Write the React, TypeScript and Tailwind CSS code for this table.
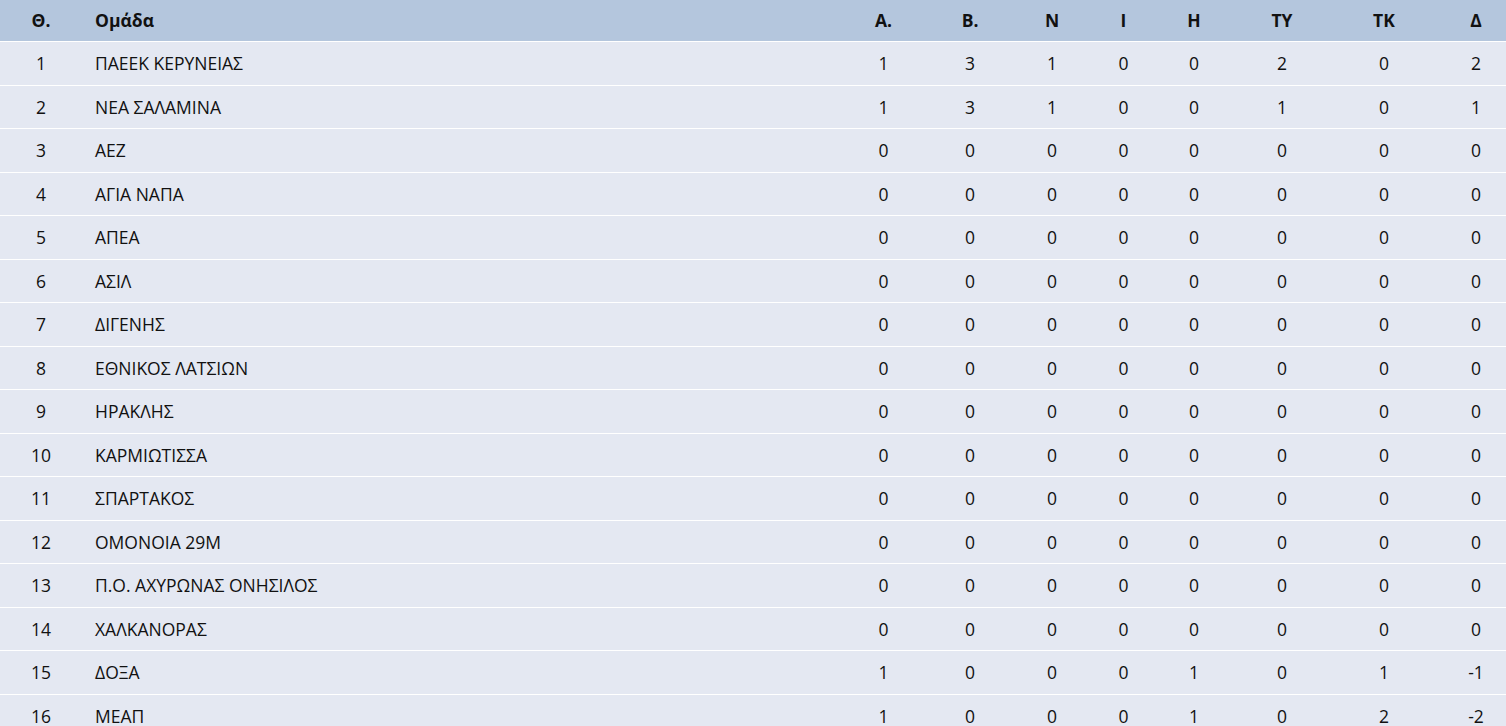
import React from "react";

type Row = [number, string, number, number, number, number, number, number, number, number];

const rows: Row[] = [
  [1, "ΠΑΕΕΚ ΚΕΡΥΝΕΙΑΣ", 1, 3, 1, 0, 0, 2, 0, 2],
  [2, "ΝΕΑ ΣΑΛΑΜΙΝΑ", 1, 3, 1, 0, 0, 1, 0, 1],
  [3, "ΑΕΖ", 0, 0, 0, 0, 0, 0, 0, 0],
  [4, "ΑΓΙΑ ΝΑΠΑ", 0, 0, 0, 0, 0, 0, 0, 0],
  [5, "ΑΠΕΑ", 0, 0, 0, 0, 0, 0, 0, 0],
  [6, "ΑΣΙΛ", 0, 0, 0, 0, 0, 0, 0, 0],
  [7, "ΔΙΓΕΝΗΣ", 0, 0, 0, 0, 0, 0, 0, 0],
  [8, "ΕΘΝΙΚΟΣ ΛΑΤΣΙΩΝ", 0, 0, 0, 0, 0, 0, 0, 0],
  [9, "ΗΡΑΚΛΗΣ", 0, 0, 0, 0, 0, 0, 0, 0],
  [10, "ΚΑΡΜΙΩΤΙΣΣΑ", 0, 0, 0, 0, 0, 0, 0, 0],
  [11, "ΣΠΑΡΤΑΚΟΣ", 0, 0, 0, 0, 0, 0, 0, 0],
  [12, "ΟΜΟΝΟΙΑ 29Μ", 0, 0, 0, 0, 0, 0, 0, 0],
  [13, "Π.Ο. ΑΧΥΡΩΝΑΣ ΟΝΗΣΙΛΟΣ", 0, 0, 0, 0, 0, 0, 0, 0],
  [14, "ΧΑΛΚΑΝΟΡΑΣ", 0, 0, 0, 0, 0, 0, 0, 0],
  [15, "ΔΟΞΑ", 1, 0, 0, 0, 1, 0, 1, -1],
  [16, "ΜΕΑΠ", 1, 0, 0, 0, 1, 0, 2, -2],
];

const headers = ["Θ.", "Ομάδα", "Α.", "Β.", "Ν", "Ι", "Η", "ΤΥ", "ΤΚ", "Δ"];

// per-column cell classes (alignment/padding to place text centres)
const cellCls = [
  "text-center",
  "text-left pl-[13px]",
  "text-center",
  "text-center pl-[3px]",
  "text-center pl-[5px]",
  "text-center",
  "text-center pr-[9px]",
  "text-center pr-[7px]",
  "text-center pl-[5px]",
  "text-center pl-[16px]",
];

const gridCols =
  "grid grid-cols-[82px_759px_85px_85px_77px_71px_79px_95px_97px_76px]";

export default function App() {
  return (
    <div
      className="w-[1506px] h-[726px] overflow-hidden bg-[#e4e8f2] text-[#111111]"
      style={{ fontFamily: '"Open Sans", "Noto Sans", sans-serif' }}
    >
      <div className={`${gridCols} h-[41px] items-center bg-[#b4c6dd] text-[17.5px] font-bold`}>
        {headers.map((h, i) => (
          <div key={i} className={cellCls[i]}>
            {h}
          </div>
        ))}
      </div>
      {rows.map((r) => (
        <div
          key={r[0]}
          className={`${gridCols} h-[43.5px] items-center border-t border-white bg-[#e4e8f2] text-[17.5px]`}
        >
          {r.map((v, i) => (
            <div key={i} className={cellCls[i]}>
              {v}
            </div>
          ))}
        </div>
      ))}
    </div>
  );
}
